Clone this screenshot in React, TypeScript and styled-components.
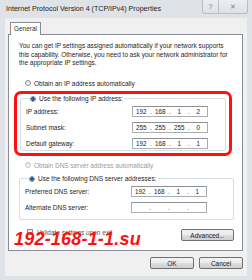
import React from "react";
import styled, { createGlobalStyle } from "styled-components";

const GlobalStyle = createGlobalStyle`
  html, body {
    margin: 0;
    padding: 0;
  }
  body {
    width: 252px;
    height: 280px;
    overflow: hidden;
    background: #dfe3e8;
    font-family: "Liberation Sans", Arial, sans-serif;
    color: #1e1e1e;
  }
`;

const Window = styled.div`
  position: relative;
  width: 252px;
  height: 280px;
  display: flex;
  flex-direction: column;
  background: #dfe3e8;
  box-sizing: border-box;
`;

const TitleBar = styled.div`
  height: 18px;
  display: flex;
  justify-content: space-between;
  align-items: flex-start;
  flex-shrink: 0;
`;

const TitleText = styled.div`
  padding: 5px 0 0 6px;
  font-size: 7.1px;
  line-height: 9px;
  color: #222;
`;

const Caption = styled.div`
  display: flex;
  margin-right: 4px;
  border: 1px solid #b9bec6;
  border-top: none;
  border-radius: 0 0 3px 3px;
  background: linear-gradient(#eceef1, #dde1e6);
`;

const CaptionButton = styled.div<{ $wide?: boolean }>`
  width: ${(p) => (p.$wide ? 28 : 15)}px;
  height: 13px;
  display: flex;
  align-items: center;
  justify-content: center;
  font-size: 7px;
  color: #7c828b;
  & + & {
    border-left: 1px solid #b9bec6;
  }
`;

const Client = styled.div`
  flex: 1;
  margin: 0 5px 4px 5px;
  padding: 4px 4px 0 3px;
  background: #f0f0f0;
  display: flex;
  flex-direction: column;
`;

const TabRow = styled.div`
  display: flex;
  padding-left: 2px;
  position: relative;
  z-index: 1;
`;

const Tab = styled.div`
  width: 31px;
  height: 13px;
  box-sizing: border-box;
  border: 1px solid #898c95;
  border-bottom: none;
  background: #fff;
  font-size: 6.5px;
  line-height: 12px;
  text-align: center;
  color: #333;
`;

const Panel = styled.div`
  height: 217px;
  box-sizing: border-box;
  margin-top: -1px;
  background: #fff;
  border: 1px solid #898c95;
  padding: 7px 8px 0 10px;
  display: flex;
  flex-direction: column;
`;

const Intro = styled.p`
  margin: 0 0 11px;
  font-size: 6.5px;
  line-height: 8.5px;
`;

const OptionRow = styled.div<{ $disabled?: boolean }>`
  display: flex;
  align-items: center;
  gap: 3px;
  height: 9px;
  margin-left: 6px;
  font-size: 6.5px;
  color: ${(p) => (p.$disabled ? "#9a9a9a" : "#1e1e1e")};
`;

const Radio = styled.span<{ $checked?: boolean; $disabled?: boolean }>`
  width: 6px;
  height: 6px;
  border-radius: 50%;
  box-sizing: border-box;
  border: 1px solid ${(p) => (p.$disabled ? "#c4c4c4" : "#8a8f96")};
  background: ${(p) =>
    p.$checked
      ? "radial-gradient(circle, #1d5fa8 0 1.6px, #f4f4f4 1.8px)"
      : "linear-gradient(#e4e4e4, #fafafa)"};
  flex-shrink: 0;
`;

const Check = styled.span`
  width: 6px;
  height: 6px;
  box-sizing: border-box;
  border: 1px solid #8a8f96;
  background: linear-gradient(#e4e4e4, #fafafa);
  flex-shrink: 0;
`;

const Highlight = styled.div`
  margin: 3.5px 0 0 -5px;
  width: 218px;
  height: 65px;
  box-sizing: border-box;
  border: 3px solid #ff1010;
  border-radius: 7px;
  padding: 0 3px;
`;

const Group = styled.fieldset<{ $width: number; $bottom: number }>`
  margin: 0;
  width: ${(p) => p.$width}px;
  box-sizing: border-box;
  border: 1px solid #d5dfe5;
  border-radius: 2px;
  padding: 3px 0 ${(p) => p.$bottom}px 5px;
  display: grid;
  grid-template-columns: 106px 76px;
  row-gap: 5px;
  align-items: center;
`;

const Legend = styled.legend`
  margin-left: 4px;
  padding: 0 1px 0 0;
  display: flex;
  align-items: center;
  gap: 3px;
  font-size: 6.5px;
  line-height: 9px;
`;

const Label = styled.span`
  font-size: 6.5px;
`;

const AddressBox = styled.div`
  height: 11px;
  box-sizing: border-box;
  border: 1px solid #abadb3;
  border-top-color: #8e9096;
  background: #fff;
  display: flex;
  align-items: center;
  font-size: 6.3px;
  color: #222;
`;

const Octet = styled.span`
  width: 16.5px;
  text-align: center;
`;

const Dot = styled.span`
  width: 2.5px;
  text-align: center;
`;

const DnsOption = styled(OptionRow)`
  margin-top: 4.5px;
`;

const DnsGroup = styled.div`
  margin-top: 4.5px;
`;

const BottomRow = styled.div`
  margin-top: 9px;
  display: flex;
  justify-content: space-between;
  align-items: flex-start;
  padding-right: 0;
`;

const Validate = styled.div`
  display: flex;
  align-items: center;
  gap: 4px;
  margin-left: 8px;
  height: 6px;
  font-size: 6.5px;
  color: #555;
`;

const Button = styled.button<{ $width: number }>`
  width: ${(p) => p.$width}px;
  height: 12px;
  padding: 0;
  box-sizing: border-box;
  border: 1px solid #707070;
  border-radius: 2px;
  background: linear-gradient(#f2f2f2 0%, #ebebeb 50%, #dddddd 51%, #cfcfcf 100%);
  font-family: "Liberation Sans", Arial, sans-serif;
  font-size: 6.5px;
  color: #222;
`;

const Footer = styled.div`
  margin-top: 6px;
  display: flex;
  justify-content: flex-end;
  gap: 5px;
`;

const Watermark = styled.div`
  position: absolute;
  left: 14px;
  top: 230px;
  font-size: 18px;
  line-height: 18px;
  font-weight: bold;
  font-style: italic;
  color: #ff1010;
  letter-spacing: 0.2px;
`;

const Address = ({ value }: { value: string[] }) => (
  <AddressBox>
    {value.map((part, i) => (
      <React.Fragment key={i}>
        {i > 0 && <Dot>.</Dot>}
        <Octet>{part}</Octet>
      </React.Fragment>
    ))}
  </AddressBox>
);

export default function App() {
  return (
    <Window>
      <GlobalStyle />
      <TitleBar>
        <TitleText>Internet Protocol Version 4 (TCP/IPv4) Properties</TitleText>
        <Caption>
          <CaptionButton>?</CaptionButton>
          <CaptionButton $wide>✕</CaptionButton>
        </Caption>
      </TitleBar>
      <Client>
        <TabRow>
          <Tab>General</Tab>
        </TabRow>
        <Panel>
          <Intro>
            You can get IP settings assigned automatically if your network supports
            this capability. Otherwise, you need to ask your network administrator
            for the appropriate IP settings.
          </Intro>
          <OptionRow>
            <Radio />
            Obtain an IP address automatically
          </OptionRow>
          <Highlight>
            <Group $width={206} $bottom={1}>
              <Legend>
                <Radio $checked />
                Use the following IP address:
              </Legend>
              <Label>IP address:</Label>
              <Address value={["192", "168", "1", "2"]} />
              <Label>Subnet mask:</Label>
              <Address value={["255", "255", "255", "0"]} />
              <Label>Default gateway:</Label>
              <Address value={["192", "168", "1", "1"]} />
            </Group>
          </Highlight>
          <DnsOption $disabled>
            <Radio $disabled />
            Obtain DNS server address automatically
          </DnsOption>
          <DnsGroup>
            <Group $width={215} $bottom={6}>
              <Legend>
                <Radio $checked />
                Use the following DNS server addresses:
              </Legend>
              <Label>Preferred DNS server:</Label>
              <Address value={["192", "168", "1", "1"]} />
              <Label>Alternate DNS server:</Label>
              <Address value={["", "", "", ""]} />
            </Group>
          </DnsGroup>
          <BottomRow>
            <Validate>
              <Check />
              Validate settings upon exit
            </Validate>
            <Button $width={53}>Advanced...</Button>
          </BottomRow>
        </Panel>
        <Footer>
          <Button $width={44}>OK</Button>
          <Button $width={44}>Cancel</Button>
        </Footer>
      </Client>
      <Watermark>192-168-1-1.su</Watermark>
    </Window>
  );
}
